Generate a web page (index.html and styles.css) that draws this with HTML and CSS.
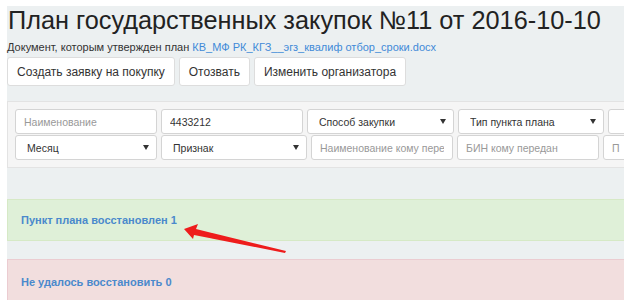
FILE: index.html
```html
<!DOCTYPE html>
<html lang="ru">
<head>
    <meta charset="UTF-8">
    <title>План государственных закупок</title>
    <link rel="stylesheet" href="styles.css">
</head>
<body>

<div class="page">
    <h1 class="title">План государственных закупок №11 от 2016-10-10</h1>
    <p class="doc">Документ, которым утвержден план <a href="#">КВ_МФ РК_КГЗ__эгз_квалиф отбор_сроки.docx</a></p>

    <div class="actions">
        <button class="btn">Создать заявку на покупку</button>
        <button class="btn">Отозвать</button>
        <button class="btn">Изменить организатора</button>
    </div>

    <div class="filters">
        <div class="row">
            <input class="field w142" placeholder="Наименование">
            <input class="field w142" value="4433212">
            <div class="select w147"><select><option>Способ закупки</option></select></div>
            <div class="select w146"><select><option>Тип пункта плана</option></select></div>
            <input class="field w146" placeholder="">
        </div>
        <div class="row">
            <div class="select w142"><select><option>Месяц</option></select></div>
            <div class="select w146"><select><option>Признак</option></select></div>
            <input class="field w142" placeholder="Наименование кому передан">
            <input class="field w142" placeholder="БИН кому передан">
            <input class="field w146" placeholder="П">
        </div>
    </div>

    <div class="alert success">Пункт плана восстановлен 1</div>
    <div class="alert danger">Не удалось восстановить 0</div>

    <svg class="arrow" width="120" height="40" viewBox="0 0 120 40">
        <polygon fill="#ee1c1c" points="10,9 24,4 22,9 112,31 111,33 20,15 19,19"/>
    </svg>
</div>

</body>
</html>
```

FILE: styles.css
```css
body {
    margin: 0;
    padding: 6px 0 0 7px;
    background: #fff;
    overflow: hidden;
    font-family: "Liberation Sans", Arial, sans-serif;
}

.page {
    position: relative;
    width: 700px;
    height: 300px;
    background: #ecf0f1;
    padding-left: 1px;
}

.title {
    margin: 0;
    font-size: 25.3px;
    font-weight: normal;
    line-height: 29px;
    color: #222;
}

.doc {
    margin: 6px 0 0 -1px;
    font-size: 11px;
    line-height: 13px;
    color: #333;
}

.doc a {
    color: #3f8ad8;
    text-decoration: none;
}

.actions {
    display: flex;
    gap: 4px;
    margin: 3px 0 0 -1px;
}

.btn {
    height: 29px;
    padding: 0 9px;
    background: #fff;
    border: 1px solid #ddd;
    border-radius: 3px;
    font-family: inherit;
    font-size: 12px;
    color: #333;
}

.filters {
    margin: 15px 0 0 -1px;
    padding: 7px 0 7px 7px;
    background: #f5f5f5;
    border: 1px solid #e3e3e3;
    border-right: none;
    display: flex;
    flex-direction: column;
    gap: 1px;
}

.row {
    display: flex;
    gap: 4px;
}

.field, .select select {
    box-sizing: border-box;
    height: 25px;
    background: #fff;
    border: 1px solid #d4d4d4;
    border-radius: 3px;
    font-family: inherit;
    font-size: 10.5px;
    color: #333;
    padding: 0 8px;
}

.field::placeholder {
    color: #999;
}

.select {
    position: relative;
}

.select select {
    width: 100%;
    appearance: none;
    padding-left: 11px;
}

.select::after {
    content: "";
    position: absolute;
    right: 8px;
    top: 10px;
    border-left: 3px solid transparent;
    border-right: 3px solid transparent;
    border-top: 5px solid #333;
}

.w142 { width: 142px; flex-shrink: 0; }
.w146 { width: 146px; flex-shrink: 0; }
.w147 { width: 147px; flex-shrink: 0; }

.alert {
    margin-left: -1px;
    padding: 0 13px;
    font-size: 11px;
    font-weight: bold;
    color: #4a89cc;
    line-height: 40px;
}

.success {
    margin-top: 31px;
    background: #dff0d8;
    border: 1px solid #d6e9c6;
    border-right: none;
}

.danger {
    margin-top: 18px;
    background: #f2dede;
    border: 1px solid #ebccd1;
    border-right: none;
    line-height: 44px;
}

.arrow {
    position: absolute;
    left: 167px;
    top: 214px;
}
```
